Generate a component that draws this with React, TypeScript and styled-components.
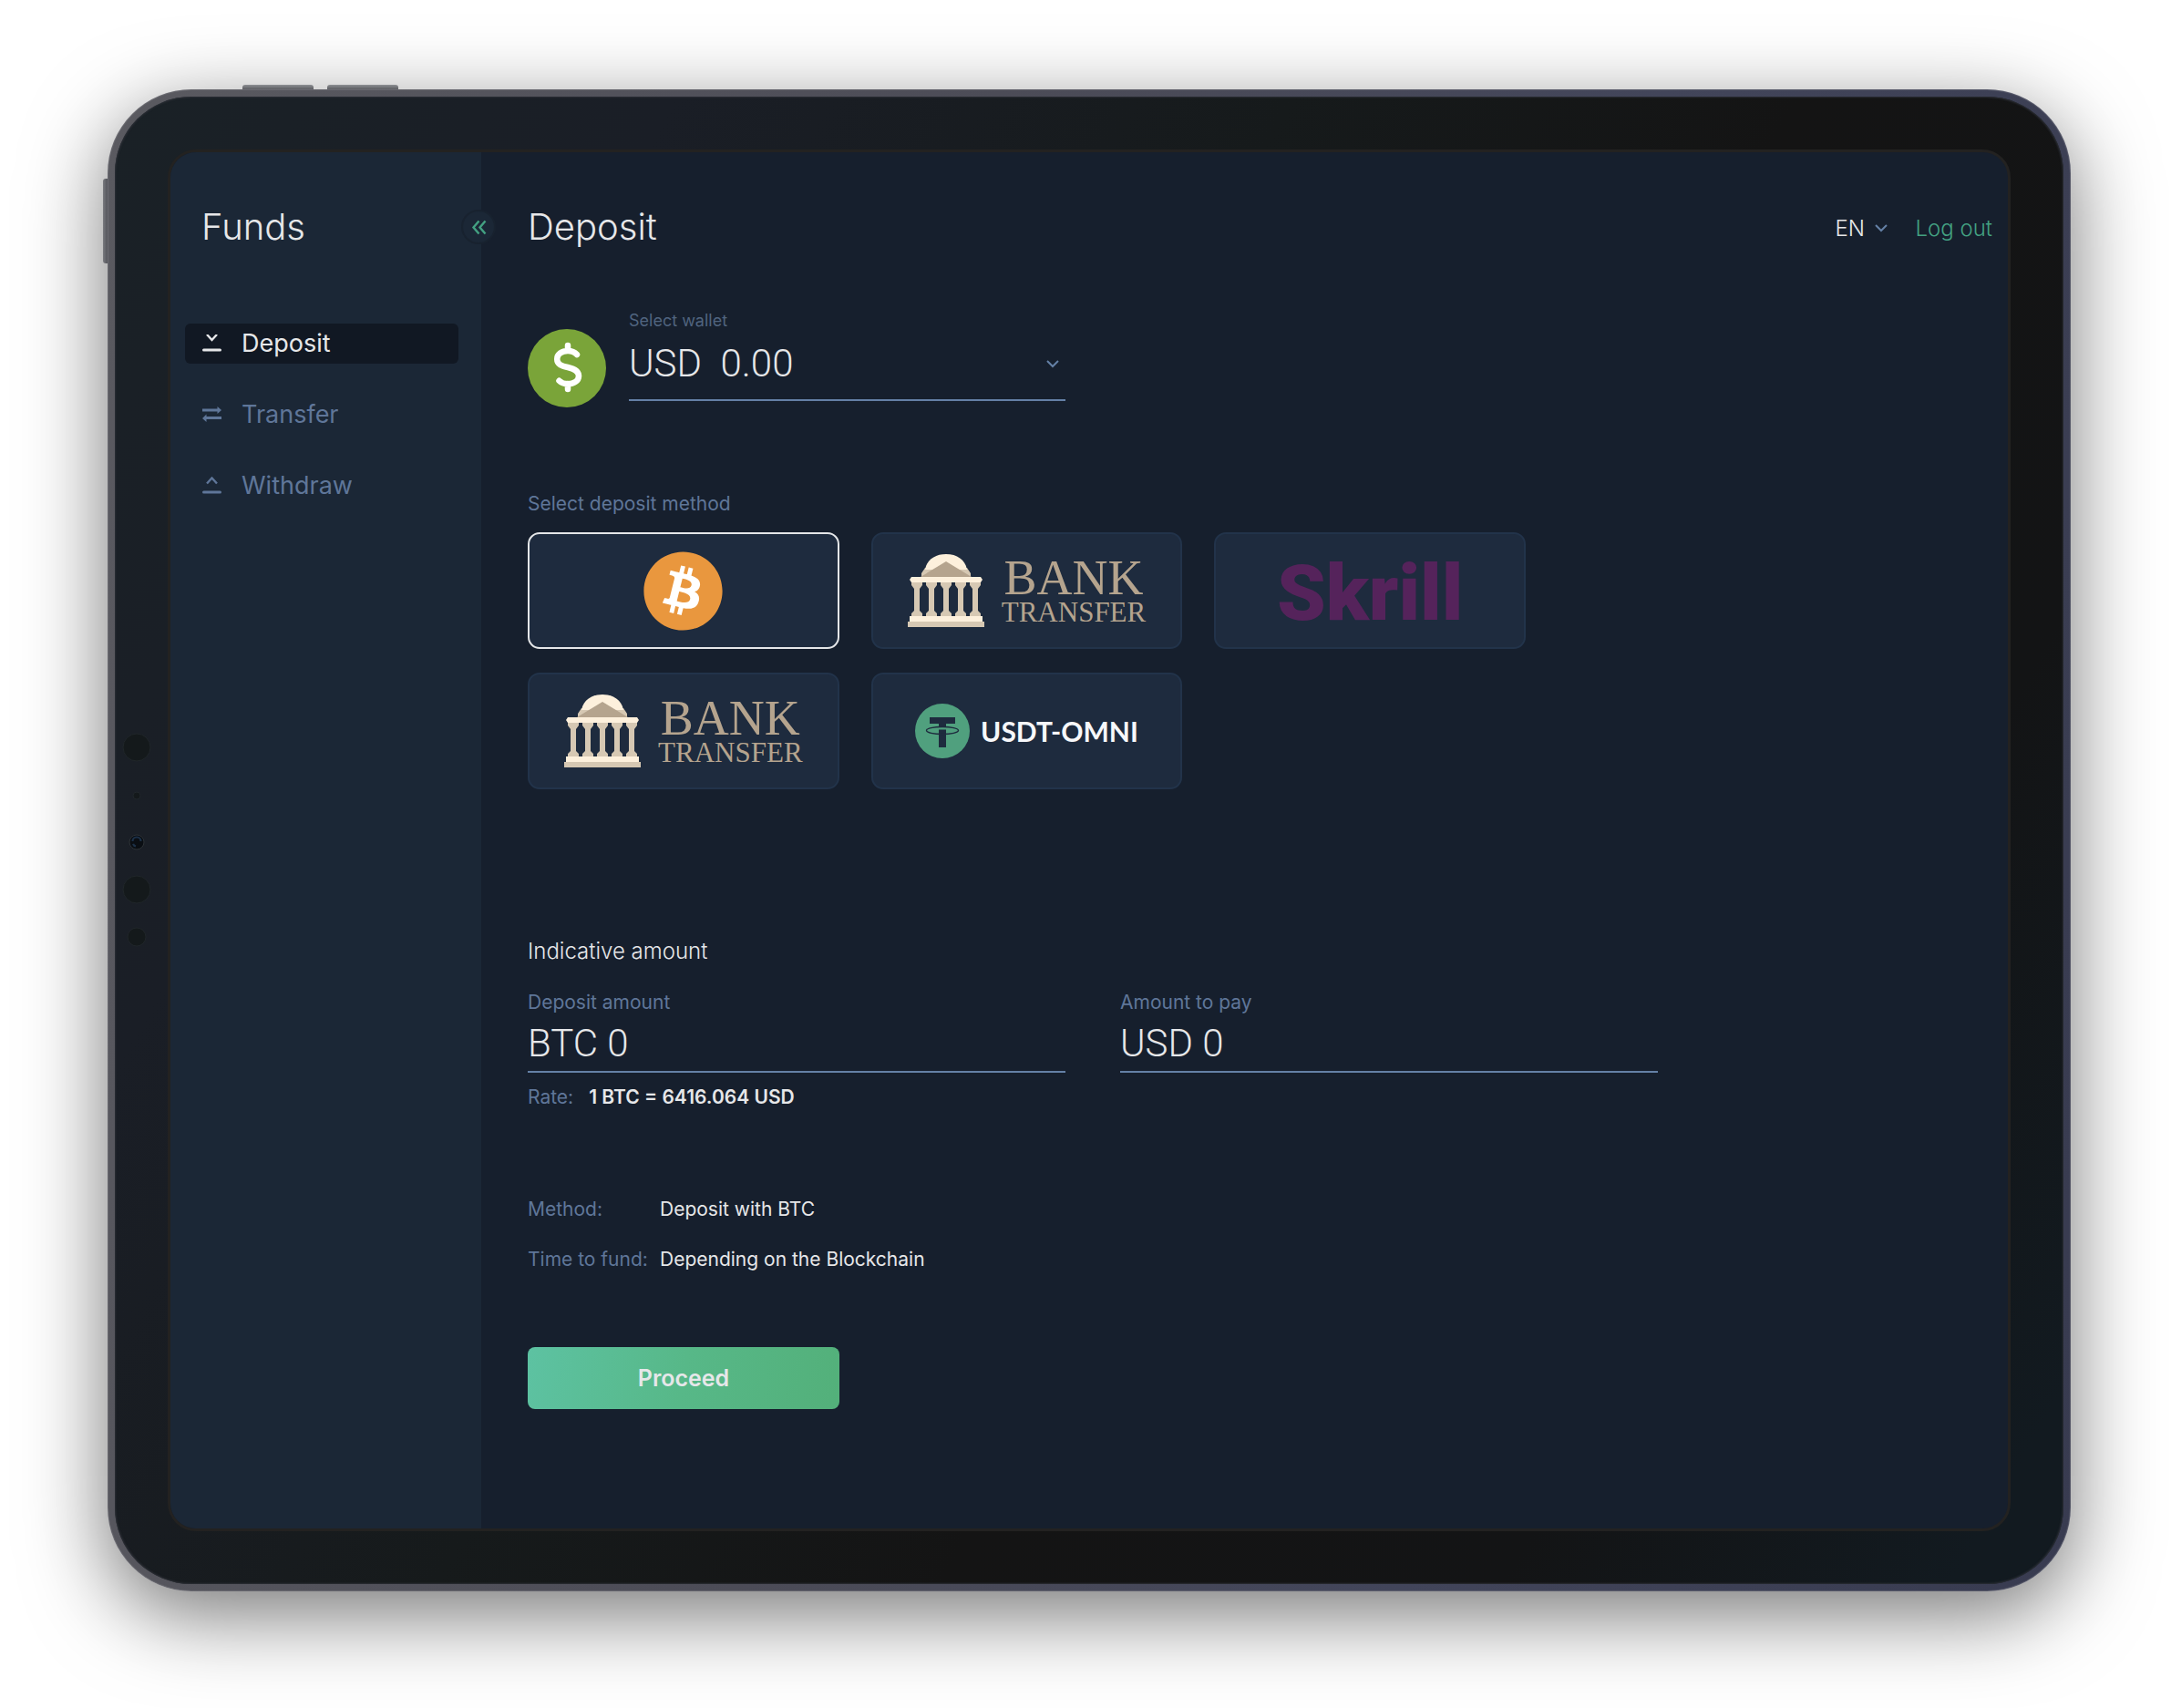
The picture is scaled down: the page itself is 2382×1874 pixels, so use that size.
import React, { useState } from "react";
import styled, { createGlobalStyle } from "styled-components";
import { FaBitcoin } from "react-icons/fa";

const sans = `Inter, "Liberation Sans", sans-serif`;
const figures = `Roboto, "Liberation Sans", sans-serif`;

const color = {
  text: "#e6e7e9",
  muted: "#5f7699",
  dim: "#50647f",
  line: "#6480a6",
  green: "#43a182",
  page: "#161f2d",
  side: "#1b2736",
  card: "#1e2b3e",
};

const GlobalStyle = createGlobalStyle`
  *, *::before, *::after { box-sizing: border-box; }
  body { margin: 0; background: #fff; font-family: ${sans}; color: ${color.text}; }
  h1, h2, p, dl, dd, dt, ul { margin: 0; padding: 0; }
  button, input, select { font: inherit; color: inherit; }
`;

/* ---------- tablet frame ---------- */

const Page = styled.div`
  display: flex;
  min-height: 100vh;
  padding: 98px 110px 128px 118px;
`;

const Frame = styled.div`
  position: relative;
  flex: 1;
  display: flex;
  padding: 8px;
  border-radius: 92px;
  background: linear-gradient(100deg, #5a5a60, #4c4c57 40%, #42455a 70%, #383b50);
  box-shadow: 0 25px 90px rgba(0, 0, 0, 0.54), inset 0 0 1px 1px rgba(150, 150, 156, 0.35);
`;

const SideKey = styled.span<{ $edge: "top" | "left"; $at: number; $length: number }>`
  position: absolute;
  background: ${(p) => (p.$edge === "top" ? "linear-gradient(#8d8f93, #5c5d62)" : "linear-gradient(90deg, #797a7f, #54555b)")};
  border-radius: ${(p) => (p.$edge === "top" ? "3px 3px 0 0" : "3px 0 0 3px")};
  ${(p) =>
    p.$edge === "top"
      ? `top: -5px; left: ${p.$at}px; width: ${p.$length}px; height: 5px;`
      : `left: -5px; top: ${p.$at}px; height: ${p.$length}px; width: 5px;`}
`;

const Bezel = styled.div`
  flex: 1;
  display: grid;
  grid-template-columns: 58px minmax(0, 1fr) 58px;
  padding: 58px 0;
  border-radius: 84px;
  background: linear-gradient(120deg, #1a2126, #1a1e26 20%, #161a1b 42%, #141414 60%, #131415 80%, #121a20 96%);
  box-shadow: inset 0 0 2px 1px #2c2f36;
`;

const SensorStrip = styled.div`
  display: flex;
  align-items: center;
`;

const Screen = styled.div`
  display: grid;
  grid-template-columns: 341px minmax(0, 1fr);
  border: 3px solid #232221;
  border-radius: 31px;
  overflow: hidden;
  background: ${color.page};
`;

/* ---------- sidebar ---------- */

const Sidebar = styled.aside`
  position: relative;
  padding: 57px 25px 0 16px;
  background: ${color.side};
`;

const Title = styled.h1`
  font-size: 40px;
  line-height: 50px;
  font-weight: 300;
`;

const SideTitle = styled(Title).attrs({ as: "h2" })`
  padding-left: 18px;
`;

const CollapseButton = styled.button`
  position: absolute;
  top: 63px;
  right: -16px;
  display: grid;
  place-items: center;
  width: 38px;
  height: 38px;
  padding: 0;
  border: 2px solid #18222f;
  border-radius: 50%;
  background: ${color.side};
  color: ${color.green};
  cursor: pointer;
`;

const Nav = styled.nav`
  display: flex;
  flex-direction: column;
  gap: 34px;
  margin-top: 81px;
`;

const NavLink = styled.a<{ $active?: boolean }>`
  display: flex;
  align-items: center;
  gap: 22px;
  height: 44px;
  padding-left: 19px;
  border-radius: 6px;
  font-size: 27px;
  line-height: 32px;
  text-decoration: none;
  color: ${(p) => (p.$active ? color.text : color.muted)};
  background: ${(p) => (p.$active ? "#111823" : "transparent")};
`;

/* ---------- content ---------- */

const Main = styled.main`
  padding: 57px 17px 60px 51px;
`;

const Header = styled.header`
  display: flex;
  align-items: center;
  justify-content: space-between;
`;

const HeaderTools = styled.div`
  display: flex;
  align-items: center;
  gap: 30px;
  padding-top: 3px;
  font-size: 24px;
  line-height: 32px;
  font-weight: 300;
`;

const SelectBox = styled.div`
  display: grid;
  align-items: center;
  > * {
    grid-area: 1 / 1;
  }
  > svg {
    justify-self: end;
    pointer-events: none;
  }
`;

const LanguageSelect = styled.select`
  appearance: none;
  width: 58px;
  padding: 0;
  border: 0;
  background: transparent;
`;

const LogOut = styled.a`
  color: ${color.green};
  text-decoration: none;
`;

const WalletRow = styled.div`
  display: flex;
  gap: 25px;
  max-width: 590px;
  margin-top: 66px;
`;

const Coin = styled.svg`
  flex: none;
  width: 86px;
  height: 86px;
  margin-top: 21px;
`;

const WalletField = styled.div`
  flex: 1;
`;

const WalletLabel = styled.label`
  display: block;
  font-size: 18px;
  line-height: 24px;
  color: ${color.dim};
`;

const WalletSelect = styled.select`
  appearance: none;
  width: 100%;
  height: 76px;
  padding: 0 0 5px;
  border: 0;
  border-bottom: 2px solid ${color.line};
  border-radius: 0;
  background: transparent;
  font-family: ${figures};
  font-size: 42px;
  font-weight: 300;
`;

const WalletArrow = styled.svg`
  width: 14px;
  height: 9px;
  margin: 0 7px 5px 0;
`;

const Label = styled.label`
  display: block;
  font-size: 21px;
  line-height: 28px;
  color: ${color.muted};
`;

const GroupLabel = styled(Label).attrs({ as: "p" })`
  margin-top: 92px;
`;

const MethodGrid = styled.div`
  display: grid;
  grid-template-columns: repeat(3, minmax(0, 1fr));
  grid-auto-rows: 128px;
  gap: 26px 35px;
  max-width: 1095px;
  margin-top: 17px;
`;

const MethodCard = styled.label<{ $selected: boolean }>`
  position: relative;
  display: flex;
  align-items: center;
  justify-content: center;
  border: 2px solid ${(p) => (p.$selected ? "#e4e6e8" : "#22334a")};
  border-radius: 13px;
  background: ${color.card};
  cursor: pointer;
`;

const HiddenRadio = styled.input`
  position: absolute;
  inset: 0;
  width: 100%;
  height: 100%;
  margin: 0;
  opacity: 0;
  cursor: pointer;
`;

const BitcoinBadge = styled.span`
  display: flex;
  color: #e9973e;
  background: radial-gradient(closest-side, #fff 80%, transparent 81%);
  svg {
    width: 89px;
    height: 89px;
  }
`;

const BankLogo = styled.span`
  display: flex;
  gap: 19px;
  height: 80px;
`;

const BankWords = styled.span`
  display: flex;
  flex-direction: column;
  align-items: center;
  padding-top: 3px;
  font-family: "Liberation Serif", serif;
  color: #b5a48e;
`;

const BankWord = styled.span<{ $large?: boolean }>`
  font-size: ${(p) => (p.$large ? 54 : 31)}px;
  line-height: ${(p) => (p.$large ? 46 : 30)}px;
`;

const SkrillLogo = styled.span`
  padding-top: 6px;
  font-family: Roboto, sans-serif;
  font-size: 86px;
  line-height: 96px;
  font-weight: 900;
  color: #55235b;
`;

const UsdtLogo = styled.span`
  display: flex;
  align-items: center;
  gap: 12px;
  font-family: Lato, sans-serif;
  font-size: 30px;
  line-height: 36px;
  font-weight: 700;
  color: #f7f8fa;
`;

const SectionTitle = styled.h2`
  margin-top: 162px;
  font-size: 24px;
  line-height: 32px;
  font-weight: 300;
`;

const Amounts = styled.div`
  display: grid;
  grid-template-columns: repeat(2, minmax(0, 1fr));
  gap: 60px;
  max-width: 1240px;
  margin-top: 26px;
`;

const AmountInput = styled.input`
  display: block;
  width: 100%;
  height: 63px;
  padding: 0;
  border: 0;
  border-bottom: 2px solid ${color.line};
  border-radius: 0;
  outline: none;
  background: transparent;
  font-family: ${figures};
  font-size: 42px;
  font-weight: 300;
`;

const Rate = styled.p`
  display: flex;
  gap: 17px;
  margin-top: 13px;
  font-size: 21px;
  line-height: 28px;
  color: ${color.muted};
  strong {
    font-weight: 600;
    color: ${color.text};
  }
`;

const Details = styled.dl`
  display: grid;
  grid-template-columns: 145px 1fr;
  row-gap: 27px;
  margin-top: 95px;
  font-size: 21px;
  line-height: 28px;
  dt {
    color: ${color.muted};
  }
`;

const ProceedButton = styled.button`
  display: block;
  width: 342px;
  height: 68px;
  margin-top: 82px;
  border: 0;
  border-radius: 8px;
  background: linear-gradient(100deg, #5dc2a2, #57b888 50%, #53b07a);
  font-size: 25px;
  font-weight: 600;
  cursor: pointer;
`;

/* ---------- drawings ---------- */

const Chevron = () => (
  <svg width="14" height="9" viewBox="0 0 14 9" fill="none" stroke={color.line} strokeWidth="2">
    <path d="M1 1l6 6 6-6" />
  </svg>
);

const DoubleChevron = () => (
  <svg width="17" height="17" viewBox="0 0 17 17" fill="none" stroke="currentColor" strokeWidth="2.4">
    <path d="M8.5 1.5L2.5 8.5l6 7M15.500 1.500l-6 7 6 7" />
  </svg>
);

const DepositIcon = () => (
  <svg width="21" height="21" viewBox="0 0 21 21" fill="none" stroke="currentColor">
    <path d="M5 0l5.500 6L16 0" strokeWidth="2.400" />
    <path d="M1.500 17h18" strokeWidth="3" strokeLinecap="round" />
  </svg>
);

const WithdrawIcon = () => (
  <svg width="21" height="21" viewBox="0 0 21 21" fill="none" stroke="currentColor">
    <path d="M5 7.500L10.500 1.500 16 7.500" strokeWidth="2.400" />
    <path d="M1.500 17h18" strokeWidth="3" strokeLinecap="round" />
  </svg>
);

const TransferIcon = () => (
  <svg width="21" height="21" viewBox="0 0 21 21" fill="currentColor">
    <path d="M0 3.500h16.500V1L21 5l-4.500 4V6.500H0zM21 12h-16.500V9.500L0 14l4.500 4v-3H21z" />
  </svg>
);

const DollarCoin = () => (
  <Coin viewBox="0 0 86 86" aria-hidden="true">
    <circle cx="43" cy="43" r="43" fill="#7aa439" />
    <path
      d="M54 28C51.500 25.300 48 24 44 24c-6.500 0-11.800 3.500-11.800 9 0 6 5.300 7.500 11.800 9s12 3.700 12 9.500c0 5.500-5.500 8.700-11.800 8.700-4 0-7.400-1.200-9.700-3.500M44 18v6M44 60v6"
      fill="none"
      stroke="#fff"
      strokeWidth="6.500"
      strokeLinecap="round"
    />
  </Coin>
);

const columns = [10, 26, 42, 58, 74];

const BankBuilding = () => (
  <svg width="84" height="80" viewBox="0 0 84 80">
    <path d="M15 25v-4l4-6h46l4 6v4z" fill="#d6c8b3" />
    <path d="M19 17C21 6 30 0 42 0s21 6 23 17z" fill="#fdf0dc" />
    <path d="M42 8L70 25H14z" fill="#b5a48e" />
    <path d="M4 25h76l2 3-2 3H4l-2-3z" fill="#fdf0dc" />
    {columns.map((x) => (
      <path key={x} d={`M${x - 6} 31h12v3l-3 4v24l3 3v3h-12v-3l3-3V38l-3-4z`} fill="#d6c8b3" />
    ))}
    <path d="M2 68h80v6H2z" fill="#fdf0dc" />
    <path d="M0 74h84v6H0z" fill="#d6c8b3" />
  </svg>
);

const TetherMark = () => (
  <svg width="60" height="60" viewBox="0 0 60 60">
    <circle cx="30" cy="30" r="30" fill="#50a07e" />
    <path d="M16 15h28v7H34v4h-8v-4H16zM26 28.500h8V48h-8z" fill={color.card} />
    <ellipse cx="30" cy="29.500" rx="17.500" ry="4" fill="none" stroke={color.card} strokeWidth="1.400" />
  </svg>
);

const Sensors = () => (
  <svg width="48" height="236" viewBox="0 0 48 236" aria-hidden="true">
    <g fill="#14191b" stroke="#20262a" strokeWidth="1">
      <circle cx="24" cy="16" r="15" />
      <circle cx="24" cy="69" r="4" />
      <circle cx="24" cy="172" r="15" />
      <circle cx="24" cy="224" r="10" />
    </g>
    <circle cx="24" cy="120" r="8" fill="#0a0e13" stroke="#2d3236" />
    <path d="M19.500 119a4.500 4.500 0 0 1 9 0M20 122a4.500 4.500 0 0 0 3 2.500" fill="none" stroke="#1c3047" strokeWidth="2.200" />
  </svg>
);

const BankTransfer = () => (
  <BankLogo>
    <BankBuilding />
    <BankWords>
      <BankWord $large>BANK</BankWord>
      <BankWord>TRANSFER</BankWord>
    </BankWords>
  </BankLogo>
);

const methods = [
  { id: "btc", name: "Bitcoin", logo: <BitcoinBadge><FaBitcoin /></BitcoinBadge> },
  { id: "bank-1", name: "Bank transfer", logo: <BankTransfer /> },
  { id: "skrill", name: "Skrill", logo: <SkrillLogo>Skrill</SkrillLogo> },
  { id: "bank-2", name: "Bank transfer", logo: <BankTransfer /> },
  { id: "usdt", name: "USDT-OMNI", logo: <UsdtLogo><TetherMark />USDT-OMNI</UsdtLogo> },
];

export default function App() {
  const [method, setMethod] = useState("btc");
  const [deposit, setDeposit] = useState("BTC 0");
  const [pay, setPay] = useState("USD 0");

  return (
    <>
      <GlobalStyle />
      <Page>
        <Frame>
          <SideKey $edge="top" $at={148} $length={78} />
          <SideKey $edge="top" $at={241} $length={78} />
          <SideKey $edge="left" $at={98} $length={93} />
          <Bezel>
            <SensorStrip>
              <Sensors />
            </SensorStrip>
            <Screen>
              <Sidebar>
                <SideTitle>Funds</SideTitle>
                <Nav>
                  <NavLink href="#deposit" $active><DepositIcon />Deposit</NavLink>
                  <NavLink href="#transfer"><TransferIcon />Transfer</NavLink>
                  <NavLink href="#withdraw"><WithdrawIcon />Withdraw</NavLink>
                </Nav>
                <CollapseButton type="button" aria-label="Collapse menu">
                  <DoubleChevron />
                </CollapseButton>
              </Sidebar>
              <Main>
                <Header>
                  <Title>Deposit</Title>
                  <HeaderTools>
                    <SelectBox>
                      <LanguageSelect aria-label="Language">
                        <option>EN</option>
                      </LanguageSelect>
                      <Chevron />
                    </SelectBox>
                    <LogOut href="#logout">Log out</LogOut>
                  </HeaderTools>
                </Header>

                <WalletRow>
                  <DollarCoin />
                  <WalletField>
                    <WalletLabel htmlFor="wallet">Select wallet</WalletLabel>
                    <SelectBox>
                      <WalletSelect id="wallet">
                        <option>{"USD\u00a0\u00a00.00"}</option>
                      </WalletSelect>
                      <WalletArrow viewBox="0 0 14 9" fill="none" stroke={color.line} strokeWidth="2">
                        <path d="M1 1l6 6 6-6" />
                      </WalletArrow>
                    </SelectBox>
                  </WalletField>
                </WalletRow>

                <GroupLabel id="methods">Select deposit method</GroupLabel>
                <MethodGrid role="radiogroup" aria-labelledby="methods">
                  {methods.map((m) => (
                    <MethodCard key={m.id} $selected={method === m.id}>
                      <HiddenRadio
                        type="radio"
                        name="method"
                        aria-label={m.name}
                        checked={method === m.id}
                        onChange={() => setMethod(m.id)}
                      />
                      {m.logo}
                    </MethodCard>
                  ))}
                </MethodGrid>

                <SectionTitle>Indicative amount</SectionTitle>
                <Amounts>
                  <div>
                    <Label htmlFor="deposit-amount">Deposit amount</Label>
                    <AmountInput id="deposit-amount" value={deposit} onChange={(e) => setDeposit(e.target.value)} />
                    <Rate>
                      Rate: <strong>1 BTC = 6416.064 USD</strong>
                    </Rate>
                  </div>
                  <div>
                    <Label htmlFor="pay-amount">Amount to pay</Label>
                    <AmountInput id="pay-amount" value={pay} onChange={(e) => setPay(e.target.value)} />
                  </div>
                </Amounts>

                <Details>
                  <dt>Method:</dt>
                  <dd>Deposit with BTC</dd>
                  <dt>Time to fund:</dt>
                  <dd>Depending on the Blockchain</dd>
                </Details>

                <ProceedButton type="button">Proceed</ProceedButton>
              </Main>
            </Screen>
          </Bezel>
        </Frame>
      </Page>
    </>
  );
}
